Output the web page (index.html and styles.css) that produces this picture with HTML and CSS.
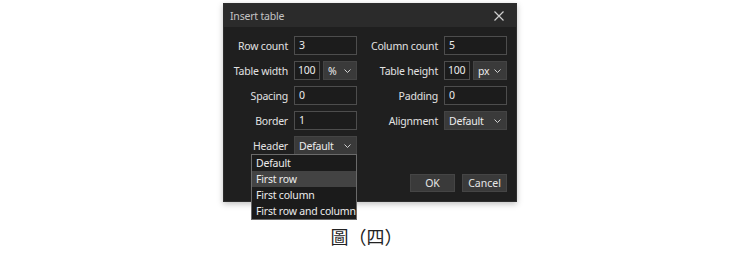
FILE: index.html
```
<!DOCTYPE html>
<html lang="en">
<head>
  <meta charset="UTF-8" />
  <title>Insert table</title>
  <link rel="stylesheet" href="styles.css">
</head>
<body>

  <div class="page">
    <div class="dialog">
      <div class="title-bar">
        <span>Insert table</span>
        <svg class="close" width="10" height="10" viewBox="0 0 10 10"><path d="M0.5 0.5 L9.5 9.5 M9.5 0.5 L0.5 9.5" stroke="#cfcfcf" stroke-width="1.2"/></svg>
      </div>

      <div class="form-grid">
        <label>Row count</label>
        <div class="field">3</div>
        <label>Column count</label>
        <div class="field">5</div>

        <label>Table width</label>
        <div class="pair">
          <div class="field num">100</div>
          <div class="select">% <svg width="7" height="4" viewBox="0 0 7 4"><path d="M0.5 0.5 L3.5 3.5 L6.5 0.5" fill="none" stroke="#d0d0d0" stroke-width="1"/></svg></div>
        </div>
        <label>Table height</label>
        <div class="pair">
          <div class="field num">100</div>
          <div class="select">px <svg width="7" height="4" viewBox="0 0 7 4"><path d="M0.5 0.5 L3.5 3.5 L6.5 0.5" fill="none" stroke="#d0d0d0" stroke-width="1"/></svg></div>
        </div>

        <label>Spacing</label>
        <div class="field">0</div>
        <label>Padding</label>
        <div class="field">0</div>

        <label>Border</label>
        <div class="field">1</div>
        <label>Alignment</label>
        <div class="select">Default <svg width="7" height="4" viewBox="0 0 7 4"><path d="M0.5 0.5 L3.5 3.5 L6.5 0.5" fill="none" stroke="#d0d0d0" stroke-width="1"/></svg></div>

        <label>Header</label>
        <div class="select header-select">Default <svg width="7" height="4" viewBox="0 0 7 4"><path d="M0.5 0.5 L3.5 3.5 L6.5 0.5" fill="none" stroke="#d0d0d0" stroke-width="1"/></svg>
          <ul class="menu">
            <li>Default</li>
            <li class="active">First row</li>
            <li>First column</li>
            <li>First row and column</li>
          </ul>
        </div>
        <div></div>
        <div></div>
      </div>

      <div class="buttons">
        <button>OK</button>
        <button>Cancel</button>
      </div>
    </div>

    <div class="caption">圖<span class="paren">（</span>四<span class="paren">）</span></div>
  </div>

</body>
</html>
```

FILE: styles.css
```
body {
  margin: 0;
  background: #fff;
  font-family: 'Noto Sans', sans-serif;
}

.page {
  display: flex;
  flex-direction: column;
  align-items: center;
  padding-top: 3px;
}

.dialog {
  width: 294px;
  height: 199px;
  box-sizing: border-box;
  background: #1f1f1f;
  border: 1px solid #2e2e2e;
  box-shadow: 0 2px 6px rgba(0, 0, 0, 0.25);
  color: #e2e2e2;
  font-size: 10.5px;
  letter-spacing: -0.2px;
}

.title-bar {
  height: 23px;
  background: #2b2b2b;
  display: flex;
  align-items: center;
  justify-content: space-between;
  padding: 0 12px 0 6px;
  color: #c4c4c4;
}

.form-grid {
  display: grid;
  grid-template-columns: 64px 63px 75px 63px;
  grid-auto-rows: 19px;
  column-gap: 6px;
  row-gap: 6px;
  margin-top: 9px;
}

label {
  text-align: right;
  align-self: center;
  white-space: nowrap;
}

.field {
  border: 1px solid #4d4d4d;
  background: #1c1c1c;
  padding: 0 4px;
  line-height: 17px;
  box-sizing: border-box;
  color: #ececec;
}

.pair {
  display: flex;
  gap: 3px;
}

.field.num {
  width: 26px;
  padding: 0 3px;
}

.select {
  flex: 1;
  display: flex;
  align-items: center;
  justify-content: space-between;
  background: #3a3a3a;
  border: 1px solid #444;
  box-sizing: border-box;
  padding: 0 5px 0 4px;
  color: #ececec;
}

.header-select {
  position: relative;
}

.menu {
  position: absolute;
  top: 17px;
  right: -1px;
  width: 106px;
  margin: 0;
  padding: 0;
  list-style: none;
  background: #1b1b1b;
  border: 1px solid #6a6a6a;
  box-sizing: border-box;
  z-index: 2;
}

.menu li {
  height: 16px;
  line-height: 16px;
  padding-left: 4px;
  white-space: nowrap;
  color: #ececec;
}

.menu li.active {
  background: #434343;
}

.buttons {
  display: flex;
  justify-content: flex-end;
  gap: 7px;
  margin-top: 19px;
  padding-right: 9px;
}

button {
  height: 18px;
  width: 45px;
  background: #3a3a3a;
  border: 1px solid #454545;
  color: #e6e6e6;
  font-family: 'Noto Sans', sans-serif;
  font-size: 10.5px;
  padding: 0;
}

.caption {
  margin-top: 21px;
  margin-left: -7px;
  font-family: 'Noto Sans CJK TC', sans-serif;
  font-size: 18px;
  line-height: 26px;
  color: #222;
}

.paren {
  display: inline-block;
  width: 18px;
  text-align: center;
}
```
